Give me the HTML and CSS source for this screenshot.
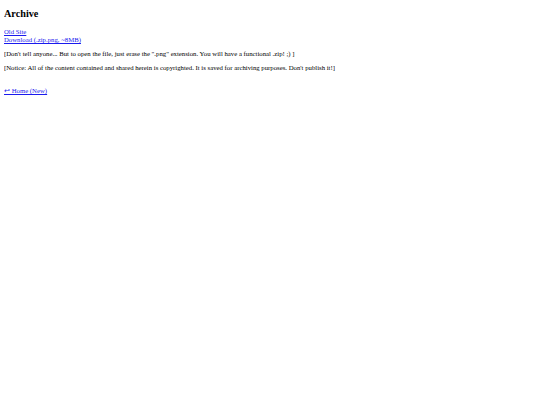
FILE: index.html
```html
<!DOCTYPE html>
<html>
<head>
<meta charset="utf-8">
<title>Archive</title>
<link rel="stylesheet" href="styles.css">
</head>
<body>
<h2 class="title">Archive</h2>
<div class="links">
<a href="#">Old Site</a><br>
<a href="#">Download (.zip.png, ~8MB)</a>
</div>
<p class="note">[Don't tell anyone... But to open the file, just erase the ".png" extension. You will have a functional .zip! ;) ]</p>
<p class="note">[Notice: All of the content contained and shared herein is copyrighted. It is saved for archiving purposes. Don't publish it!]</p>
<p class="home"><a href="#">&#8617; Home (New)</a></p>
</body>
</html>
```
FILE: styles.css
```css
html, body {
  background: #fff;
}
body {
  margin: 4px;
  font-family: "Liberation Serif", "Times New Roman", serif;
  font-size: 6.75px;
  line-height: 8px;
  color: #000;
}
a {
  color: #1a1aee;
}
.title {
  font-size: 10.2px;
  line-height: 12px;
  margin: 4px 0 8px 0;
}
.links {
  margin: 0;
}
.note {
  margin: 6px 0;
}
.home {
  margin: 15px 0 0 0;
}
```
